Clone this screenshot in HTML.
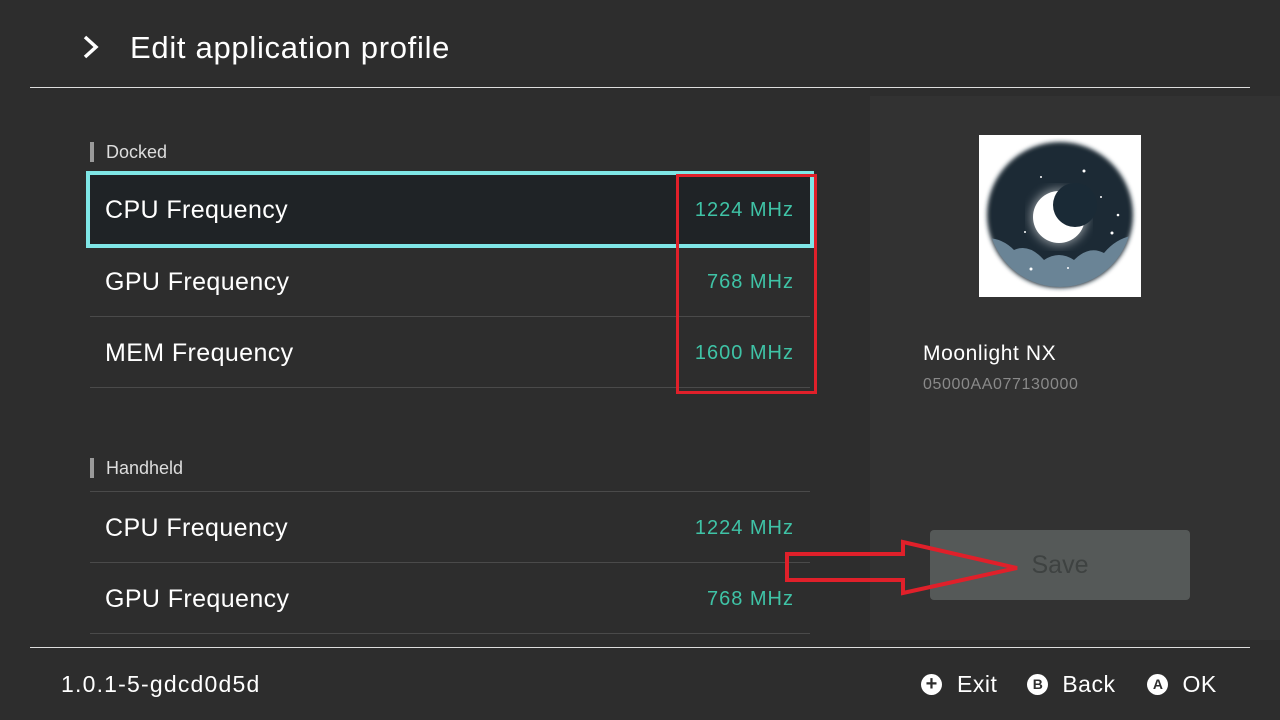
<!DOCTYPE html><html><head><style>
*{margin:0;padding:0;box-sizing:border-box}
body{width:1280px;height:720px;background:#2d2d2d;font-family:"Liberation Sans",sans-serif;color:#fff;position:relative;overflow:hidden}
.a{position:absolute}
.row{position:absolute;left:90px;width:720px;height:71px;border-bottom:1px solid #4a4a4a}
.row .l{position:absolute;left:15px;top:22px;font-size:25px;letter-spacing:0.4px}
.row .r{position:absolute;right:16px;top:25px;font-size:20px;color:#3fc3a6;letter-spacing:1px}
.sec{position:absolute;left:90px;font-size:18px;color:#ddd;padding-left:12px;border-left:4px solid #9a9a9a;line-height:20px}
.btn{display:inline-block;width:21px;height:21px;border-radius:50%;background:#fff;color:#2d2d2d;font-weight:bold;text-align:center;line-height:21px;letter-spacing:0}
</style></head><body>
<svg class="a" style="left:80px;top:34px" width="22" height="26"><path d="M5 3 L16 13 L5 23" stroke="#fff" stroke-width="3.5" fill="none"/></svg>
<div class="a" style="left:130px;top:30px;font-size:31px;letter-spacing:0.7px">Edit application profile</div>
<div class="a" style="left:30px;top:87px;width:1220px;height:1px;background:#ddd"></div>
<div class="a" style="left:870px;top:96px;width:410px;height:544px;background:#323232"></div>
<div class="sec" style="top:142px">Docked</div>
<div class="a" style="left:86px;top:171px;width:728px;height:77px;border:4px solid #7fe6e6;background:#1f2326"></div>
<div class="row" style="top:174px;border:none"><div class="l">CPU Frequency</div><div class="r">1224 MHz</div></div>
<div class="row" style="top:246px"><div class="l">GPU Frequency</div><div class="r">768 MHz</div></div>
<div class="row" style="top:317px"><div class="l">MEM Frequency</div><div class="r">1600 MHz</div></div>
<div class="sec" style="top:458px">Handheld</div>
<div class="a" style="left:90px;top:491px;width:720px;height:1px;background:#4a4a4a"></div>
<div class="row" style="top:492px"><div class="l">CPU Frequency</div><div class="r">1224 MHz</div></div>
<div class="row" style="top:563px"><div class="l">GPU Frequency</div><div class="r">768 MHz</div></div>
<div class="a" style="left:676px;top:174px;width:141px;height:220px;border:3px solid #e0202a"></div>
<div class="a" style="left:979px;top:135px;width:162px;height:162px;background:#fff"></div>
<svg class="a" style="left:979px;top:135px" width="162" height="162">
<defs><clipPath id="c"><circle cx="81" cy="80" r="72"/></clipPath><filter id="b"><feGaussianBlur stdDeviation="2"/></filter><filter id="g"><feGaussianBlur stdDeviation="5"/></filter></defs>
<circle cx="81" cy="80" r="73" fill="#1a2a36" filter="url(#b)"/>
<g clip-path="url(#c)"><path d="M0 104 Q20 100 35 115 Q50 108 65 125 Q80 115 95 125 Q110 110 125 118 Q140 100 162 100 L162 162 L0 162Z" fill="#6a8496"/></g>
<circle cx="80" cy="82" r="28" fill="#fff" filter="url(#g)" opacity=".5"/>
<circle cx="80" cy="82" r="26" fill="#fff"/>
<circle cx="96" cy="70" r="22" fill="#1a2a36"/>
<g fill="#fff"><circle cx="105" cy="36" r="1.5"/><circle cx="62" cy="42" r="1"/><circle cx="69" cy="71" r="1.5"/><circle cx="122" cy="62" r="1"/><circle cx="139" cy="80" r="1.3"/><circle cx="133" cy="98" r="1.5"/><circle cx="46" cy="97" r="1"/><circle cx="52" cy="134" r="1.5"/><circle cx="89" cy="133" r="1"/><circle cx="115" cy="155" r="1.5"/></g>
</svg>
<div class="a" style="left:923px;top:342px;font-size:21px;letter-spacing:0.6px">Moonlight NX</div>
<div class="a" style="left:923px;top:376px;font-size:16px;color:#8a8a8a;letter-spacing:0.6px">05000AA077130000</div>
<div class="a" style="left:930px;top:530px;width:260px;height:70px;background:#555958;border-radius:4px;text-align:center;line-height:70px;font-size:25px;color:#3e4241">Save</div>
<svg class="a" style="left:780px;top:535px" width="250" height="65"><path d="M7 19 L123 19 L123 7 L237 33 L123 58 L123 45 L7 45Z" fill="none" stroke="#e0202a" stroke-width="4"/></svg>
<div class="a" style="left:30px;top:647px;width:1220px;height:1px;background:#ddd"></div>
<div class="a" style="left:61px;top:671px;font-size:23px;letter-spacing:1.2px">1.0.1-5-gdcd0d5d</div>
<div class="a" style="left:921px;top:671px;font-size:23px;display:flex;align-items:center;letter-spacing:0.5px">
<span class="btn" style="font-size:20px;margin-right:15px">+</span>Exit
<span class="btn" style="font-size:14px;margin:0 14px 0 30px">B</span>Back
<span class="btn" style="font-size:14px;margin:0 14px 0 32px">A</span>OK</div>
</body></html>
